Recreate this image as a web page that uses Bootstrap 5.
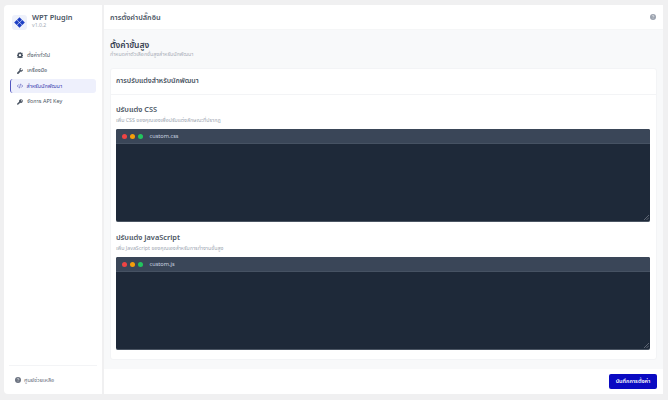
<!DOCTYPE html>
<html lang="th">
<head>
<meta charset="utf-8">
<title>WPT Plugin</title>
<link rel="stylesheet" href="https://cdn.jsdelivr.net/npm/bootstrap@5.3.0/dist/css/bootstrap.min.css">
<style>
html,body{height:100%;}
body{background:#f0f0f1;font-family:"Noto Sans","Noto Sans Thai","Open Sans",sans-serif;color:#374151;overflow:hidden;}
.app-shell{height:389px;margin:5px 5px 0 4px;gap:2px;}
.side-pane{width:98px;background:#fff;border-radius:4px 0 0 4px;flex:none;}
.brand-area{padding:10px 8px 0 8px;height:43px;gap:5px;}
.brand-box{width:15px;height:15px;background:#eef1fb;border-radius:3px;flex:none;}
.brand-text{margin-top:-3px;}
.brand-name{font-size:7.4px;font-weight:600;line-height:10px;color:#4b5563;}
.brand-ver{font-size:5.2px;line-height:7.200px;color:#a3aab5;}
.side-menu{padding:0 6px;gap:1.5px;}
.side-link{height:14px;font-size:5.5px;color:#4b5563;padding:0 0 0 7px;gap:4px;border-radius:3px;text-decoration:none;font-weight:400;}
.side-link.on{background:#eef0fc;color:#3b3fb0;border-left:1.5px solid #5257c0;padding-left:5.5px;}
.side-foot{border-top:1px solid #f3f4f6;margin:0 5px;padding:0 5px 0 6px;font-size:5.5px;color:#6b7280;gap:3px;height:29px;}
.main-pane{background:#f8f9fa;border-radius:0 4px 4px 0;min-width:0;}
.top-strip{height:25px;background:#fff;padding:0 7px 0 6px;border-bottom:1px solid #f5f6f7;}
.top-title{font-size:7.4px;font-weight:600;color:#4b5563;margin:0;}
.body-scroll{padding:9px 6px 0 6px;min-height:0;}
.page-title{font-size:8.5px;font-weight:600;color:#374151;line-height:12px;margin:0;}
.page-sub{font-size:5.3px;color:#a8aeb8;line-height:8px;margin:-1px 0 10px 0;}
.panel-box{background:#fff;border:1px solid #f3f4f6;border-radius:3px;}
.panel-head{height:26px;padding:0 5px;border-bottom:1px solid #f3f4f6;font-size:7px;font-weight:600;color:#4b5563;}
.panel-body{padding:9px 6px 0 5px;}
.field-title{font-size:7.4px;font-weight:600;color:#4b5563;line-height:11px;}
.field-sub{font-size:5.3px;color:#a0a7b2;line-height:8px;margin:1px 0 5px 0;}
.code-win{height:93px;background:#1e2939;border-radius:2px;overflow:hidden;border-bottom:1px solid #4b5563;margin-bottom:10px;position:relative;}
.code-win:last-child{margin-bottom:9px;}
.code-bar{height:15px;background:#3a4658;padding-left:6px;gap:3px;border-bottom:1px solid #465263;flex:none;}
.code-dot{width:5px;height:5px;border-radius:50%;}
.dot-r{background:#ef4444;}.dot-y{background:#f59e0b;}.dot-g{background:#22c55e;}
.code-name{font-size:5.6px;color:#cbd5e1;margin-left:3.500px;}
.code-grip{position:absolute;right:1px;bottom:1px;}
.foot-strip{height:25px;background:#fff;padding:0 6px;margin-top:auto;}
.save-btn{background:#0a0ac2;border:0;color:#fff;font-size:5.5px;font-weight:600;height:15px;width:48px;padding:0;border-radius:2px;}
</style>
</head>
<body>
<div class="app-shell d-flex">
  <aside class="side-pane d-flex flex-column">
    <div class="brand-area d-flex align-items-start">
      <div class="brand-box d-flex align-items-center justify-content-center">
        <svg width="11" height="11" viewBox="0 0 12 12"><path fill="#1d3fc4" d="M6 .2 8.700 2.900 6 5.600 3.300 2.900ZM2.900 3.300 5.600 6 2.900 8.700.2 6ZM9.100 3.300 11.800 6 9.100 8.700 6.400 6ZM6 6.400 8.700 9.100 6 11.800 3.300 9.100Z"/></svg>
      </div>
      <div class="brand-text">
        <div class="brand-name">WPT Plugin</div>
        <div class="brand-ver">v1.0.2</div>
      </div>
    </div>
    <nav class="side-menu d-flex flex-column">
      <a class="side-link d-flex align-items-center" href="#"><svg width="6" height="6" viewBox="0 0 16 16"><path fill="#4b5563" d="M6.500 0h3l.4 2.200 1.500.6L13.300 1.500l2.100 2.100-1.300 1.900.6 1.500 2.300.5v3l-2.300.4-.6 1.500 1.300 1.900-2.100 2.100-1.900-1.300-1.500.6-.4 2.300h-3l-.4-2.300-1.500-.6-1.900 1.300-2.100-2.100 1.300-1.900-.6-1.500L-.1 10V7l2.300-.5.600-1.500L1.500 3.600l2.100-2.100 1.900 1.300 1.500-.6ZM8 5.500a3 3 0 1 0 0 6 3 3 0 0 0 0-6Z"/></svg>ตั้งค่าทั่วไป</a>
      <a class="side-link d-flex align-items-center" href="#"><svg width="6" height="6" viewBox="0 0 16 16"><path fill="#4b5563" d="M15.500 3.500 12.800 6.200 10 5.500 9.600 3 12.300.4A4.500 4.500 0 0 0 6.500 6L.8 11.800a2.300 2.300 0 0 0 3.300 3.300L9.900 9.400a4.500 4.500 0 0 0 5.600-5.900Z"/></svg>เครื่องมือ</a>
      <a class="side-link on d-flex align-items-center" href="#"><svg width="6" height="6" viewBox="0 0 16 16" fill="none" stroke="#3b3fb0" stroke-width="1.500"><path d="M4.500 4 .9 8l3.600 4M11.500 4l3.600 4-3.600 4M9.500 2 6.500 14"/></svg>สำหรับนักพัฒนา</a>
      <a class="side-link d-flex align-items-center" href="#"><svg width="6" height="6" viewBox="0 0 16 16"><path fill="#4b5563" d="M10.500.5a5 5 0 0 0-4.800 6.500L.5 12.200V15.500h3.300V13.300H6V11.100h2.200L9 10.300A5 5 0 1 0 10.500.5Zm1.500 2.500a1.500 1.500 0 1 1 0 3 1.500 1.500 0 0 1 0-3Z"/></svg>จัดการ API Key</a>
    </nav>
    <div class="side-foot d-flex align-items-center mt-auto">
      <svg width="6" height="6" viewBox="0 0 16 16"><circle cx="8" cy="8" r="8" fill="#6b7280"/><path d="M5.800 6a2.200 2.200 0 1 1 3.300 1.900C8.300 8.400 8 8.800 8 9.500M8 11.500v1.500" stroke="#fff" stroke-width="1.500" fill="none"/></svg>
      ศูนย์ช่วยเหลือ
    </div>
  </aside>
  <main class="main-pane flex-grow-1 d-flex flex-column">
    <header class="top-strip d-flex align-items-center justify-content-between">
      <h1 class="top-title">การตั้งค่าปลั๊กอิน</h1>
      <svg width="6" height="6" viewBox="0 0 16 16"><circle cx="8" cy="8" r="8" fill="#9ca3af"/><path d="M5.800 6a2.200 2.200 0 1 1 3.300 1.900C8.300 8.400 8 8.800 8 9.500M8 11.500v1.500" stroke="#fff" stroke-width="1.500" fill="none"/></svg>
    </header>
    <div class="body-scroll flex-grow-1">
      <h2 class="page-title">ตั้งค่าขั้นสูง</h2>
      <p class="page-sub">กำหนดค่าตัวเลือกขั้นสูงสำหรับนักพัฒนา</p>
      <section class="panel-box">
        <div class="panel-head d-flex align-items-center">การปรับแต่งสำหรับนักพัฒนา</div>
        <div class="panel-body">
          <div class="field-title">ปรับแต่ง CSS</div>
          <div class="field-sub">เพิ่ม CSS ของคุณเองเพื่อปรับแต่งลักษณะที่ปรากฏ</div>
          <div class="code-win d-flex flex-column">
            <div class="code-bar d-flex align-items-center"><span class="code-dot dot-r"></span><span class="code-dot dot-y"></span><span class="code-dot dot-g"></span><span class="code-name">custom.css</span></div>
            <svg class="code-grip" width="5" height="5" viewBox="0 0 5 5" stroke="#9ca3af" stroke-width=".5"><path d="M0 5 5 0M2.500 5 5 2.500"/></svg>
          </div>
          <div class="field-title">ปรับแต่ง JavaScript</div>
          <div class="field-sub">เพิ่ม JavaScript ของคุณเองสำหรับการทำงานขั้นสูง</div>
          <div class="code-win d-flex flex-column">
            <div class="code-bar d-flex align-items-center"><span class="code-dot dot-r"></span><span class="code-dot dot-y"></span><span class="code-dot dot-g"></span><span class="code-name">custom.js</span></div>
            <svg class="code-grip" width="5" height="5" viewBox="0 0 5 5" stroke="#9ca3af" stroke-width=".5"><path d="M0 5 5 0M2.500 5 5 2.500"/></svg>
          </div>
        </div>
      </section>
    </div>
    <footer class="foot-strip d-flex align-items-center justify-content-end">
      <button class="btn save-btn" type="button">บันทึกการตั้งค่า</button>
    </footer>
  </main>
</div>
<script src="https://cdn.jsdelivr.net/npm/bootstrap@5.3.0/dist/js/bootstrap.bundle.min.js"></script>
</body>
</html>
